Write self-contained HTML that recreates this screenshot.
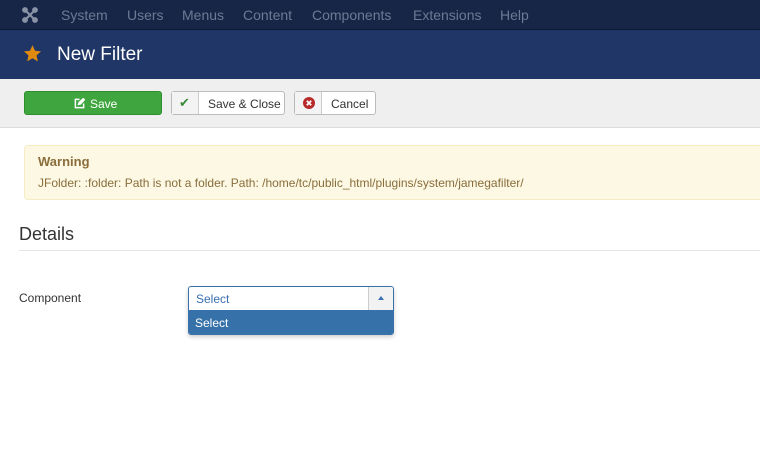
<!DOCTYPE html>
<html><head><style>
*{box-sizing:border-box;margin:0;padding:0}
body{width:760px;height:462px;overflow:hidden;background:#fff;font-family:"Liberation Sans",sans-serif;position:relative}
.nav{position:absolute;left:0;top:0;width:760px;height:30px;background:#172647;border-bottom:1px solid #0d1833}
.nav span{position:absolute;top:7px;font-size:14px;color:#6c7a96}
.hdr{position:absolute;left:0;top:30px;width:760px;height:49px;background:#1f3666}
.hdr h1{position:absolute;left:57px;top:14px;font-size:19px;font-weight:normal;color:#fff}
.tb{position:absolute;left:0;top:79px;width:760px;height:49px;background:#efefef;border-bottom:1px solid #ddd}
.btn{position:absolute;top:12px;height:24px;border:1px solid #bbb;border-radius:3px;background:#fff;font-size:12px;color:#333}
.warn{position:absolute;left:24px;top:145px;width:740px;height:55px;background:#fcf8e3;border:1px solid #f5ecc4;border-radius:4px}
</style></head><body>
<div class="nav">
<svg style="position:absolute;left:22px;top:7px" width="16" height="16" viewBox="0 0 16 16" fill="none" stroke="#8a93a6" stroke-width="2.2"><path d="M3 3L13 13M13 3L3 13"/><circle cx="3" cy="3" r="1.8" fill="#8a93a6"/><circle cx="13" cy="3" r="1.8" fill="#8a93a6"/><circle cx="3" cy="13" r="1.8" fill="#8a93a6"/><circle cx="13" cy="13" r="1.8" fill="#8a93a6"/></svg>
<span style="left:61px">System</span><span style="left:127px">Users</span><span style="left:182px">Menus</span><span style="left:243px">Content</span><span style="left:312px">Components</span><span style="left:413px">Extensions</span><span style="left:500px">Help</span>
</div>
<div class="hdr">
<svg style="position:absolute;left:23px;top:14px" width="19" height="19" viewBox="0 0 24 24"><path d="M12 1.5l3.2 7 7.6.8-5.7 5.1 1.6 7.5L12 18l-6.7 3.9 1.6-7.5L1.2 9.3l7.6-.8z" fill="#e08a10"/></svg>
<h1>New Filter</h1>
</div>
<div class="tb">
<div class="btn" style="left:24px;width:138px;background:#3fa63f;border-color:#2f8f2f;color:#fff"><svg style="position:absolute;left:49px;top:6px" width="11" height="11" viewBox="0 0 12 12" fill="none" stroke="#fff" stroke-width="1.6"><path d="M6 1.5H1.5v9h9V6"/><path d="M5 7l.5-2L10 .8l1.2 1.2L7 6.5z" fill="#fff"/></svg><span style="position:absolute;left:65px;top:5px">Save</span></div>
<div class="btn" style="left:171px;width:114px"><div style="position:absolute;left:0;top:0;width:27px;height:22px;background:#f3f3f3;border-right:1px solid #ccc"></div><span style="position:absolute;left:7px;top:3px;color:#3a8a3a;font-size:13px">✔</span><span style="position:absolute;left:36px;top:5px">Save &amp; Close</span></div>
<div class="btn" style="left:294px;width:82px"><div style="position:absolute;left:0;top:0;width:27px;height:22px;background:#f3f3f3;border-right:1px solid #ccc"></div><svg style="position:absolute;left:8px;top:5px" width="12" height="12" viewBox="0 0 12 12"><circle cx="6" cy="6" r="6" fill="#b72a2a"/><path d="M3.8 3.8l4.4 4.4M8.2 3.8L3.8 8.2" stroke="#fff" stroke-width="1.8"/></svg><span style="position:absolute;left:36px;top:5px">Cancel</span></div>
</div>
<div class="warn">
<div style="position:absolute;left:13px;top:8px;font-size:13px;font-weight:bold;color:#8a6d3b">Warning</div>
<div style="position:absolute;left:13px;top:30px;font-size:12px;color:#8a6d3b">JFolder: :folder: Path is not a folder. Path: /home/tc/public_html/plugins/system/jamegafilter/</div>
</div>
<div style="position:absolute;left:19px;top:224px;font-size:18px;color:#333">Details</div>
<div style="position:absolute;left:19px;top:250px;width:741px;height:1px;background:#e5e5e5"></div>
<div style="position:absolute;left:19px;top:291px;font-size:12px;color:#333">Component</div>
<div style="position:absolute;left:188px;top:286px;width:206px;height:49px;border:1px solid #3a72ab;border-radius:3px;box-shadow:0 2px 4px rgba(0,0,0,.2);background:#fff;overflow:hidden">
<span style="position:absolute;left:7px;top:5px;font-size:12px;color:#3a6fb0">Select</span>
<div style="position:absolute;left:179px;top:0;width:26px;height:23px;background:#f2f2f2;border-left:1px solid #ccc"></div>
<div style="position:absolute;left:189px;top:9px;width:0;height:0;border-left:3px solid transparent;border-right:3px solid transparent;border-bottom:4px solid #3a6fb0"></div>
<div style="position:absolute;left:0;top:23px;width:206px;height:25px;background:#3672a9;color:#fff;font-size:12px;padding:6px 6px">Select</div>
</div>
</body></html>
